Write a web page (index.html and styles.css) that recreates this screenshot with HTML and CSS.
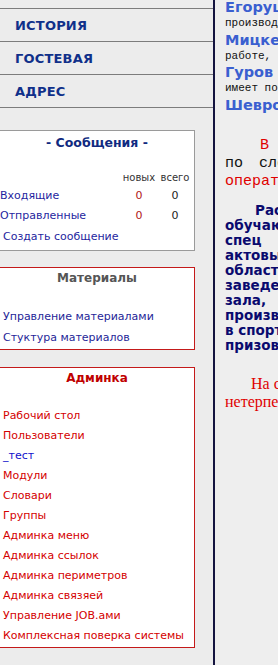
FILE: index.html
```html
<!DOCTYPE html>
<html lang="ru">
<head>
<meta charset="utf-8">
<title>Админка</title>
<link rel="stylesheet" href="styles.css">
</head>
<body>
<div class="page">
  <aside class="side">
    <ul class="menu">
      <li><a href="#">ИСТОРИЯ</a></li>
      <li><a href="#">ГОСТЕВАЯ</a></li>
      <li><a href="#">АДРЕС</a></li>
    </ul>

    <div class="box box-msg">
      <div class="msg-title">- Сообщения -</div>
      <table class="msg-table">
        <tr class="msg-head"><td></td><td>новых</td><td>всего</td></tr>
        <tr><td class="lbl"><a href="#">Входящие</a></td><td class="new">0</td><td class="all">0</td></tr>
        <tr><td class="lbl"><a href="#">Отправленные</a></td><td class="new">0</td><td class="all">0</td></tr>
      </table>
      <a class="msg-create" href="#">Создать сообщение</a>
    </div>

    <div class="box box-red box-mat">
      <div class="box-title title-gray">Материалы</div>
      <ul class="links links-mat">
        <li><a href="#">Управление материалами</a></li>
        <li><a href="#">Стуктура материалов</a></li>
      </ul>
    </div>

    <div class="box box-red box-adm">
      <div class="box-title title-red">Админка</div>
      <ul class="links links-adm">
        <li><a href="#">Рабочий стол</a></li>
        <li><a href="#">Пользователи</a></li>
        <li><a class="blue" href="#">_тест</a></li>
        <li><a href="#">Модули</a></li>
        <li><a href="#">Словари</a></li>
        <li><a href="#">Группы</a></li>
        <li><a href="#">Админка меню</a></li>
        <li><a href="#">Админка ссылок</a></li>
        <li><a href="#">Админка периметров</a></li>
        <li><a href="#">Админка связяей</a></li>
        <li><a href="#">Управление JOB.ами</a></li>
        <li><a href="#">Комплексная поверка системы</a></li>
      </ul>
    </div>
  </aside>

  <main class="content">
    <div class="inner">
      <div class="name">Егорушкин Иван</div>
      <div class="mono">производственник, мастер</div>
      <div class="name">Мицкевич Андрей</div>
      <div class="mono">работе, руководитель</div>
      <div class="name">Гуров Сергей</div>
      <div class="mono">имеет почётное звание</div>
      <div class="name">Шевров Павел</div>

      <div class="para">
        <div class="line ind red">В настоящее время</div>
        <div class="line wide">по следующим</div>
        <div class="line red">оператор</div>
      </div>

      <div class="comic">
        <div class="ind2">Расписание</div>
        <div>обучающихся</div>
        <div>спец&nbsp;&nbsp;&nbsp;&nbsp;&nbsp;групп</div>
        <div>актовый зал</div>
        <div>областного</div>
        <div>заведения</div>
        <div>зала,&nbsp;&nbsp;&nbsp;&nbsp;где</div>
        <div>производится</div>
        <div>в спортивном</div>
        <div>призовые</div>
      </div>

      <div class="serif">
        <div class="ind3">На сегодня</div>
        <div>нетерпение</div>
      </div>
    </div>
  </main>
</div>
</body>
</html>
```

FILE: styles.css
```css
html, body {
  margin: 0;
  padding: 0;
  overflow: hidden;
  background: #ececec;
}

.page {
  display: flex;
  align-items: stretch;
  min-height: 665px;
  font-family: "DejaVu Sans", Verdana, sans-serif;
}

a { text-decoration: none; }

.side {
  width: 213px;
  flex: none;
}

.menu {
  list-style: none;
  margin: 8px 0 0;
  padding: 0;
}
.menu li {
  height: 32px;
  border-top: 1px solid #7c7c7c;
  display: flex;
  align-items: center;
  padding-left: 15px;
}
.menu li:last-child { border-bottom: 1px solid #7c7c7c; }
.menu a {
  font-weight: bold;
  font-size: 13px;
  color: #10308a;
  letter-spacing: 0.2px;
}

.box {
  background: #ffffff;
  width: 194px;
  margin-left: -1px;
  border: 1px solid #9a9a9a;
}
.box-red { border-color: #c41a1a; }

.box-msg { margin-top: 22px; padding-bottom: 3px; }
.msg-title {
  text-align: center;
  font-weight: bold;
  font-size: 12.5px;
  line-height: 24px;
  color: #102a80;
}
.msg-table {
  border-collapse: collapse;
  margin-top: 14px;
  font-size: 11px;
}
.msg-table td { padding: 0; height: 20px; }
.msg-table .lbl { width: 121px; }
.msg-table td:nth-child(2), .msg-table td:nth-child(3) {
  width: 36px;
  text-align: center;
}
.msg-head td {
  height: 16px;
  font-size: 10px;
  color: #333;
}
.msg-table a { color: #1f1fa0; }
.msg-table .new { color: #b01818; }
.msg-table .all { color: #222; }
.msg-create {
  display: block;
  margin: 2px 0 0 3px;
  line-height: 20px;
  font-size: 11px;
  color: #1f1fa0;
}

.box-title {
  text-align: center;
  font-weight: bold;
  font-size: 12px;
  line-height: 20px;
}
.title-gray { color: #555555; }
.title-red { color: #c00000; }

.links {
  list-style: none;
  margin: 18px 0 0;
  padding: 0 0 1px 3px;
  font-size: 11px;
}
.links-mat li { line-height: 21px; }
.links-mat a { color: #1f1f98; }
.links-adm li { line-height: 20px; }
.links-adm a { color: #d40000; }
.links-adm a.blue { color: #1010cc; }

.box-mat { margin-top: 16px; }
.box-adm { margin-top: 17px; }

.content {
  flex: 1;
  min-width: 0;
  overflow: hidden;
  border-left: 2px solid #14143f;
  background: #eeeeee;
}
.inner {
  width: 400px;
  padding-left: 10px;
  margin-top: -1px;
  white-space: nowrap;
}

.name {
  font-family: "DejaVu Sans", Verdana, sans-serif;
  font-weight: bold;
  font-size: 14.5px;
  line-height: 17px;
  color: #3a5fd0;
}
.mono {
  font-family: "Liberation Mono", "Courier New", monospace;
  font-size: 11px;
  line-height: 15.5px;
  color: #111;
}

.para {
  margin-top: 23px;
  font-family: "Liberation Mono", "Courier New", monospace;
  font-size: 15px;
  line-height: 18px;
  color: #111;
}
.red { color: #e00000; }
.ind { padding-left: 35px; }
.wide { word-spacing: 7px; }

.comic {
  margin-top: 12px;
  font-family: "Comic Sans MS", "DejaVu Sans", sans-serif;
  font-weight: bold;
  font-size: 13.5px;
  line-height: 15px;
  color: #0a0a6e;
}
.ind2 { padding-left: 30px; }

.serif {
  margin-top: 22px;
  font-family: "Liberation Serif", "Times New Roman", serif;
  font-size: 16px;
  line-height: 18px;
  color: #e00000;
}
.ind3 { padding-left: 26px; }
```
